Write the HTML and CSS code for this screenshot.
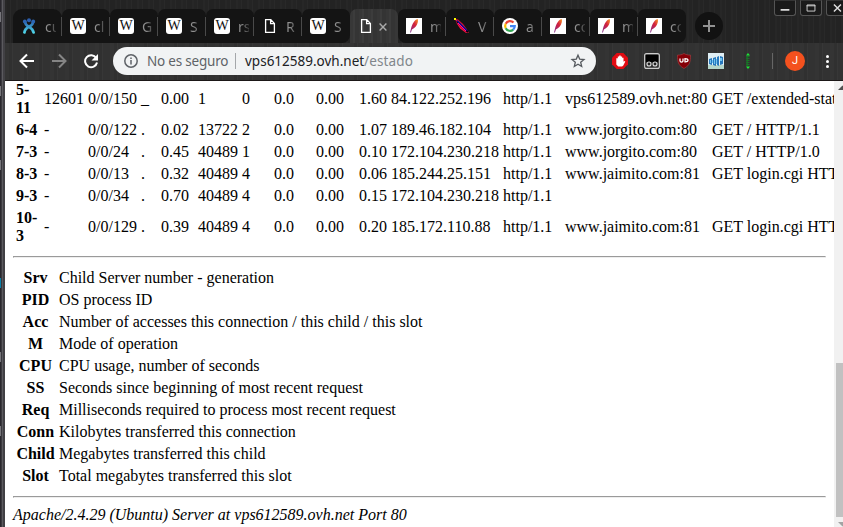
FILE: index.html
```
<!DOCTYPE html>
<html lang="es">
<head>
<meta charset="utf-8">
<title>Apache Status</title>
<link rel="stylesheet" href="styles.css">
</head>
<body>
<svg class="defs" width="0" height="0">
  <defs>
    <linearGradient id="plume" x1="1" y1="0" x2="0" y2="1"><stop offset="0" stop-color="#f79a23"/><stop offset=".4" stop-color="#d4213c"/><stop offset="1" stop-color="#7a2a8c"/></linearGradient>
    <linearGradient id="jo" x1="0" y1="0" x2="0" y2="1"><stop offset="0" stop-color="#2b62b0"/><stop offset="1" stop-color="#4fd5e8"/></linearGradient>
    <symbol id="feather" viewBox="0 0 16 16"><path fill="#fff" d="M0 0h16v16H0z"/><path fill="url(#plume)" d="M11.500 1C8.800 1.700 6.300 5.500 5 10.500L4 14.800l1-.6.900-2.800C8.700 10.400 11 7.500 11.800 4.200c.3-1.400.2-2.500-.3-3.200z"/></symbol>
    <symbol id="doc" viewBox="0 0 16 16"><path fill="none" stroke="#fff" stroke-width="1.300" d="M3.600 1.700h5.200l3.600 3.700v8.900H3.600zM8.600 1.700v4h3.800"/></symbol>
  </defs>
</svg>
<div class="window">
  <div class="desktop"><i></i><i></i><i></i><i class="blue"></i><i></i><i></i></div>
  <div class="browser">
    <header class="strip">
      <nav class="tabs">
        <div class="tab"><svg class="fav" viewBox="0 0 16 16"><path fill="none" stroke="url(#jo)" stroke-width="2.700" stroke-linecap="round" d="M4 3.500c0 6 7.500 4 8.600 11M12.200 3.500c0 6-8 4-8.800 11"/><circle cx="8" cy="2.200" r="2" fill="#2d5fae"/><circle cx="3.800" cy="3.400" r="1.900" fill="#2d66b4"/><circle cx="12.200" cy="3.400" r="1.900" fill="#2d66b4"/></svg><span class="name">cu</span></div>
        <div class="tab"><span class="fav wiki">W</span><span class="name">cl</span></div>
        <div class="tab"><span class="fav wiki">W</span><span class="name">G</span></div>
        <div class="tab"><span class="fav wiki">W</span><span class="name">S</span></div>
        <div class="tab"><span class="fav wiki">W</span><span class="name">rs</span></div>
        <div class="tab"><svg class="fav"><use href="#doc"/></svg><span class="name">R</span></div>
        <div class="tab last"><span class="fav wiki">W</span><span class="name">S</span></div>
        <div class="tab active"><svg class="fav"><use href="#doc"/></svg><svg class="close" viewBox="0 0 8 8"><path d="M.6.600l6.800 6.800M7.400.600L.6 7.400"/></svg></div>
        <div class="tab first"><svg class="fav"><use href="#feather"/></svg><span class="name">m</span></div>
        <div class="tab"><svg class="fav" viewBox="0 0 16 16"><path fill="#f0143c" d="M1 1l3 .5 5 4.500 3 4 3 4.500-3 .5-6-4.500L3 6z"/><path fill="none" stroke="#001" stroke-width="2.200" d="M3 3l11 11"/><path fill="none" stroke="#2222ff" d="M3 2.500l10 10"/><path stroke="#f0a" d="M4 5l8 8"/><path fill="#ff0" d="M0 0h2v2H0z"/></svg><span class="name">V</span></div>
        <div class="tab"><svg class="fav" viewBox="0 0 16 16"><circle cx="8" cy="8" r="8" fill="#fff"/><g fill="none" stroke-width="2.200"><path stroke="#ea4335" d="M3.700 5.800A4.800 4.800 0 0 1 11.500 4.600"/><path stroke="#fbbc05" d="M3.700 10.200a4.800 4.800 0 0 1 0-4.400"/><path stroke="#34a853" d="M11.200 11.600a4.800 4.800 0 0 1-7.500-1.400"/><path stroke="#4285f4" d="M8 8.100h4.800a4.800 4.800 0 0 1-1.600 3.500"/></g></svg><span class="name">a</span></div>
        <div class="tab"><svg class="fav"><use href="#feather"/></svg><span class="name">co</span></div>
        <div class="tab"><svg class="fav"><use href="#feather"/></svg><span class="name">m</span></div>
        <div class="tab last"><svg class="fav"><use href="#feather"/></svg><span class="name">co</span></div>
      </nav>
      <svg class="plus" viewBox="0 0 28 28"><circle cx="14" cy="14" r="14" fill="#121212"/><path stroke="#929292" stroke-width="2" d="M8 14h12M14 8v12"/></svg>
      <div class="controls">
        <svg viewBox="0 0 22 16"><path stroke="#ddd" stroke-width="2" d="M6 10h10"/></svg>
        <svg viewBox="0 0 22 16"><path fill="none" stroke="#ddd" d="M6.500 4.500h9v7h-9zM6 5.500h10"/></svg>
        <svg viewBox="0 0 22 16"><path stroke="#ddd" stroke-width="1.700" d="M7.500 4l8 8M15.500 4l-8 8"/></svg>
      </div>
    </header>
    <div class="toolbar">
      <div class="nav">
        <svg viewBox="0 0 16 16"><path d="M15 8H2M8 1.500L1.500 8 8 14.500"/></svg>
        <svg class="dim" viewBox="0 0 16 16"><path d="M1 8h13M8 1.500L14.500 8 8 14.500"/></svg>
        <svg viewBox="0 0 16 16"><path d="M13.200 5A6 6 0 1 0 14 9.500"/><path class="solid" d="M15 1v6.500H8.500z"/></svg>
      </div>
      <div class="address">
        <svg class="info" viewBox="0 0 14 14"><circle cx="7" cy="7" r="6.200"/><path d="M7 6v4.500M7 3.400v1.500"/></svg>
        <span class="insecure">No es seguro</span><span class="divider"></span>
        <span class="host">vps612589.ovh.net</span><span class="path">/estado</span>
        <svg class="star" viewBox="0 0 14 14"><path d="M7 1.200l1.700 3.900 4.300.4-3.300 2.800 1 4.200L7 10.300l-3.700 2.200 1-4.200L1 5.500l4.300-.4z"/></svg>
      </div>
      <div class="extensions">
        <svg viewBox="0 0 16 16"><path fill="#e10b12" d="M4.700 0h6.600L16 4.700v6.600L11.300 16H4.700L0 11.300V4.700z"/><path fill="#fff" d="M4.300 5.200h1.500V3.500h1.400v-1h1.500v1h1.400v1.300h1.400v3.900l1.100-.8.700.6-2 3.900-1.200 1.100H6.200l-1.900-2z"/></svg>
        <svg viewBox="0 0 16 16"><rect x=".6" y=".6" width="14.800" height="14.800" rx="2" fill="#2d2d2d" stroke="#ccc" stroke-width="1.100"/><path fill="#000" d="M2 2h12v7H2z"/><g fill="#222" stroke="#ddd" stroke-width="1.100"><circle cx="5" cy="11" r="2"/><circle cx="11" cy="11" r="2"/></g></svg>
        <svg viewBox="0 0 16 16"><path fill="#850007" stroke="#a23a3e" stroke-width=".7" d="M8 .5c2 1.200 4 1.600 6.500 1.600 0 6.500-.4 10-6.500 13.400C1.900 12.100 1.500 8.600 1.500 2.100 4 2.100 6 1.700 8 .5z"/><path fill="none" stroke="#fff" stroke-width="1.300" d="M4 5.500v2.300c0 1.700 3 1.700 3 0V5.500M9 5.600v3.200c4 .3 4-3.200 0-3.200z"/></svg>
        <svg viewBox="0 0 16 16"><path fill="#dfeef4" d="M0 0h16v16H0z"/><path fill="#b6d6ca" d="M0 12h16v4H0z"/><path fill="#2879bd" d="M1 6l3-1v7l-3-1zM5 5l3-1v9l-3-1zM9 4l2-1v10l-2-1zM12 3l3 1v7l-3 1z"/><path fill="#72c4ef" d="M2 7h1v3H2zM6 6h1v5H6zM12 5h2v3h-2zM4 7h1v3H4zM8 6h1v5H8z"/></svg>
        <svg viewBox="0 0 16 16"><path stroke="#1a7027" stroke-width="3" d="M8 3v10" stroke-dasharray="1 1"/><path fill="#1bea36" d="M8 0l2 2.500H6zM8 16l2-2.500H6z"/><path stroke="#108422" d="M7 3v10"/></svg>
      </div>
      <span class="rule"></span>
      <span class="avatar">J</span>
      <span class="more"><i></i><i></i><i></i></span>
    </div>
    <div class="viewport">
      <main class="page">
        <table class="workers">
          <colgroup><col class="w26"><col class="w42"><col class="w51"><col class="w18"><col class="w35"><col class="w42"><col class="w30"><col class="w40"><col class="w41"><col class="w30"><col class="w110"><col class="w60"><col class="w145"><col class="w200"></colgroup>
          <tr><th>5-<br>11</th><td>12601</td><td>0/0/150</td><td>_</td><td>0.00</td><td>1</td><td>0</td><td>0.0</td><td>0.00</td><td>1.60</td><td>84.122.252.196</td><td>http/1.1</td><td>vps612589.ovh.net:80</td><td>GET /extended-status HTTP/1.1</td></tr>
          <tr><th>6-4</th><td>-</td><td>0/0/122</td><td>.</td><td>0.02</td><td>13722</td><td>2</td><td>0.0</td><td>0.00</td><td>1.07</td><td>189.46.182.104</td><td>http/1.1</td><td>www.jorgito.com:80</td><td>GET / HTTP/1.1</td></tr>
          <tr><th>7-3</th><td>-</td><td>0/0/24</td><td>.</td><td>0.45</td><td>40489</td><td>1</td><td>0.0</td><td>0.00</td><td>0.10</td><td>172.104.230.218</td><td>http/1.1</td><td>www.jorgito.com:80</td><td>GET / HTTP/1.0</td></tr>
          <tr><th>8-3</th><td>-</td><td>0/0/13</td><td>.</td><td>0.32</td><td>40489</td><td>4</td><td>0.0</td><td>0.00</td><td>0.06</td><td>185.244.25.151</td><td>http/1.1</td><td>www.jaimito.com:81</td><td>GET login.cgi HTTP/1.0</td></tr>
          <tr><th>9-3</th><td>-</td><td>0/0/34</td><td>.</td><td>0.70</td><td>40489</td><td>4</td><td>0.0</td><td>0.00</td><td>0.15</td><td>172.104.230.218</td><td>http/1.1</td><td></td><td></td></tr>
          <tr><th>10-<br>3</th><td>-</td><td>0/0/129</td><td>.</td><td>0.39</td><td>40489</td><td>4</td><td>0.0</td><td>0.00</td><td>0.20</td><td>185.172.110.88</td><td>http/1.1</td><td>www.jaimito.com:81</td><td>GET login.cgi HTTP/1.0</td></tr>
        </table>
        <hr>
        <table class="legend">
          <tr><th>Srv</th><td>Child Server number - generation</td></tr>
          <tr><th>PID</th><td>OS process ID</td></tr>
          <tr><th>Acc</th><td>Number of accesses this connection / this child / this slot</td></tr>
          <tr><th>M</th><td>Mode of operation</td></tr>
          <tr><th>CPU</th><td>CPU usage, number of seconds</td></tr>
          <tr><th>SS</th><td>Seconds since beginning of most recent request</td></tr>
          <tr><th>Req</th><td>Milliseconds required to process most recent request</td></tr>
          <tr><th>Conn</th><td>Kilobytes transferred this connection</td></tr>
          <tr><th>Child</th><td>Megabytes transferred this child</td></tr>
          <tr><th>Slot</th><td>Total megabytes transferred this slot</td></tr>
        </table>
        <hr>
        <address>Apache/2.4.29 (Ubuntu) Server at vps612589.ovh.net Port 80</address>
      </main>
      <div class="scrollbar"><svg viewBox="0 0 9 12"><path fill="#505050" d="M4 9l4.500-4.500L13 9z"/></svg><div class="thumb"></div><svg class="down" viewBox="0 0 9 10"><path fill="#a3a3a3" d="M4 5h9L8.500 9.500z"/></svg></div>
    </div>
  </div>
</div>
</body>
</html>
```
FILE: styles.css
```
* { box-sizing: border-box; }
body { margin: 0; overflow: hidden; }
svg { display: block; flex: none; }
.defs { position: absolute; }
.window { display: flex; width: 843px; height: 527px; overflow: hidden; background: #fff; }

.desktop { width: 5px; flex: none; padding: 12px 3px 0 0; background: linear-gradient(90deg, #29272d 0 1px, #3a393e 1px 2px, #5b5a5f 2px 3px, #414044 3px); display: flex; flex-direction: column; gap: 64px; }
.desktop i { width: 1px; height: 10px; flex: none; background: #77767b; }
.desktop .blue { background: #087fa8; margin-top: -18px; margin-top: 44px; }
.browser { width: 838px; flex: none; display: flex; flex-direction: column; }

.strip { height: 43px; flex: none; display: flex; align-items: flex-start; background: repeating-linear-gradient(90deg, #272727 0 2px, #242424 2px 5px, #292929 5px 6px, #232323 6px 11px); }
.tabs { display: flex; padding: 9px 0 0 8px; }
.tab { width: 48px; height: 34px; padding: 9px 0 0 8px; background: #141414; border-radius: 7px 7px 0 0; display: flex; position: relative; font: 14px/17px "Noto Sans", sans-serif; }
.tab:first-child { width: 49px; border-radius: 9px 9px 0 0; }
.tab::after { content: ""; position: absolute; right: 0; top: 8px; width: 1px; height: 19px; background: #4a4a4a; }
.tab.last::after, .tab.active::after { display: none; }
.tab.last { border-radius: 7px 7px 8px 0; }
.tab.first { border-radius: 7px 7px 0 8px; }
.tab.active { background: repeating-linear-gradient(90deg, #373737 0 3px, #3c3c3c 3px 5px, #343434 5px 9px); }
.fav { width: 16px; height: 16px; flex: none; }
.wiki { background: #fff; border-radius: 3px; color: #111; font: 14px/16px "Liberation Serif", serif; text-align: center; }
.name { margin-left: 8px; width: 11px; overflow: hidden; white-space: nowrap; color: transparent; background: linear-gradient(90deg, #909090 35%, #3a3a3a); -webkit-background-clip: text; background-clip: text; }
.close { width: 8px; height: 8px; margin: 5px 0 0 5px; overflow: visible; fill: none; stroke: #aaa; stroke-width: 1.4px; }
.plus { width: 28px; height: 28px; margin: 12px 0 0 9px; }
.controls { display: flex; gap: 4px; margin-left: 51px; }
.controls svg { width: 22px; height: 16px; border: 1px solid #555; border-top-color: #343434; border-radius: 0 0 3px 3px; background: #1a1a1a; }

.toolbar { height: 38px; flex: none; display: flex; align-items: center; padding-bottom: 1px; border-bottom: 1px solid #1b1717; background: repeating-linear-gradient(90deg, #343434 0 4px, #303030 4px 7px, #373737 7px 8px, #323232 8px 15px); }
.nav { display: flex; gap: 16px; margin-left: 14px; }
.nav svg { width: 16px; height: 16px; fill: none; stroke: #fff; stroke-width: 2; }
.nav .dim { stroke: #858585; }
.nav .solid { fill: #fff; stroke: none; }
.address { width: 483px; height: 28px; margin-left: 14px; padding: 0 11px; border-radius: 14px; background: #f1f3f4; display: flex; align-items: center; font: 13.5px/20px "Noto Sans", sans-serif; white-space: nowrap; }
.info { width: 14px; height: 14px; fill: none; stroke: #5f6368; stroke-width: 1.5; }
.insecure { width: 81px; margin-left: 9px; color: #5f6368; letter-spacing: -.2px; }
.divider { width: 1px; height: 16px; margin: 0 9px 0 7px; background: #a4a7aa; }
.host { width: 119px; color: #202124; }
.path { color: #80868b; letter-spacing: .15px; }
.star { width: 14px; height: 14px; margin-left: auto; fill: none; stroke: #55595e; stroke-width: 1.3; overflow: visible; }
.extensions { display: flex; gap: 16px; margin-left: 16px; }
.extensions svg { width: 16px; height: 16px; }
.rule { width: 1px; height: 16px; margin-left: 16px; background: #666; }
.avatar { width: 20px; height: 20px; margin-left: 12px; border-radius: 50%; background: #f4511e; color: #fff; font: 11px/20px Roboto, sans-serif; text-align: center; }
.more { display: flex; flex-direction: column; gap: 2px; margin-left: 21px; }
.more i { width: 3px; height: 3px; border-radius: 50%; background: #fff; }

.viewport { height: 446px; display: flex; overflow: hidden; }
.page { width: 829px; flex: none; padding: 0 8px; overflow: hidden; margin-top: -3px; color: #000; font: 16px/18px "Liberation Serif", serif; }
table { border-spacing: 2px; border-collapse: separate; }
th, td { padding: 1px; text-align: left; white-space: nowrap; vertical-align: middle; }
.workers { table-layout: fixed; width: 900px; }
.legend th { width: 41px; text-align: center; }
hr { margin: 8px 0; height: 2px; border: 1px solid; border-color: #9a9a9a #eee #eee #9a9a9a; }
address { font-style: italic; }
.w18 { width: 18px; } .w26 { width: 26px; } .w30 { width: 30px; } .w35 { width: 35px; }
.w40 { width: 40px; } .w41 { width: 41px; } .w42 { width: 42px; } .w51 { width: 51px; }
.w60 { width: 60px; } .w110 { width: 110px; } .w145 { width: 145px; } .w200 { width: 200px; }
.scrollbar { width: 9px; flex: none; display: flex; flex-direction: column; background: #f1f1f1; }
.scrollbar svg { width: 9px; height: 12px; }
.thumb { width: 7px; height: 154px; margin: 270px 0 0 2px; background: #c1c1c1; }
.scrollbar .down { height: 10px; }
```
